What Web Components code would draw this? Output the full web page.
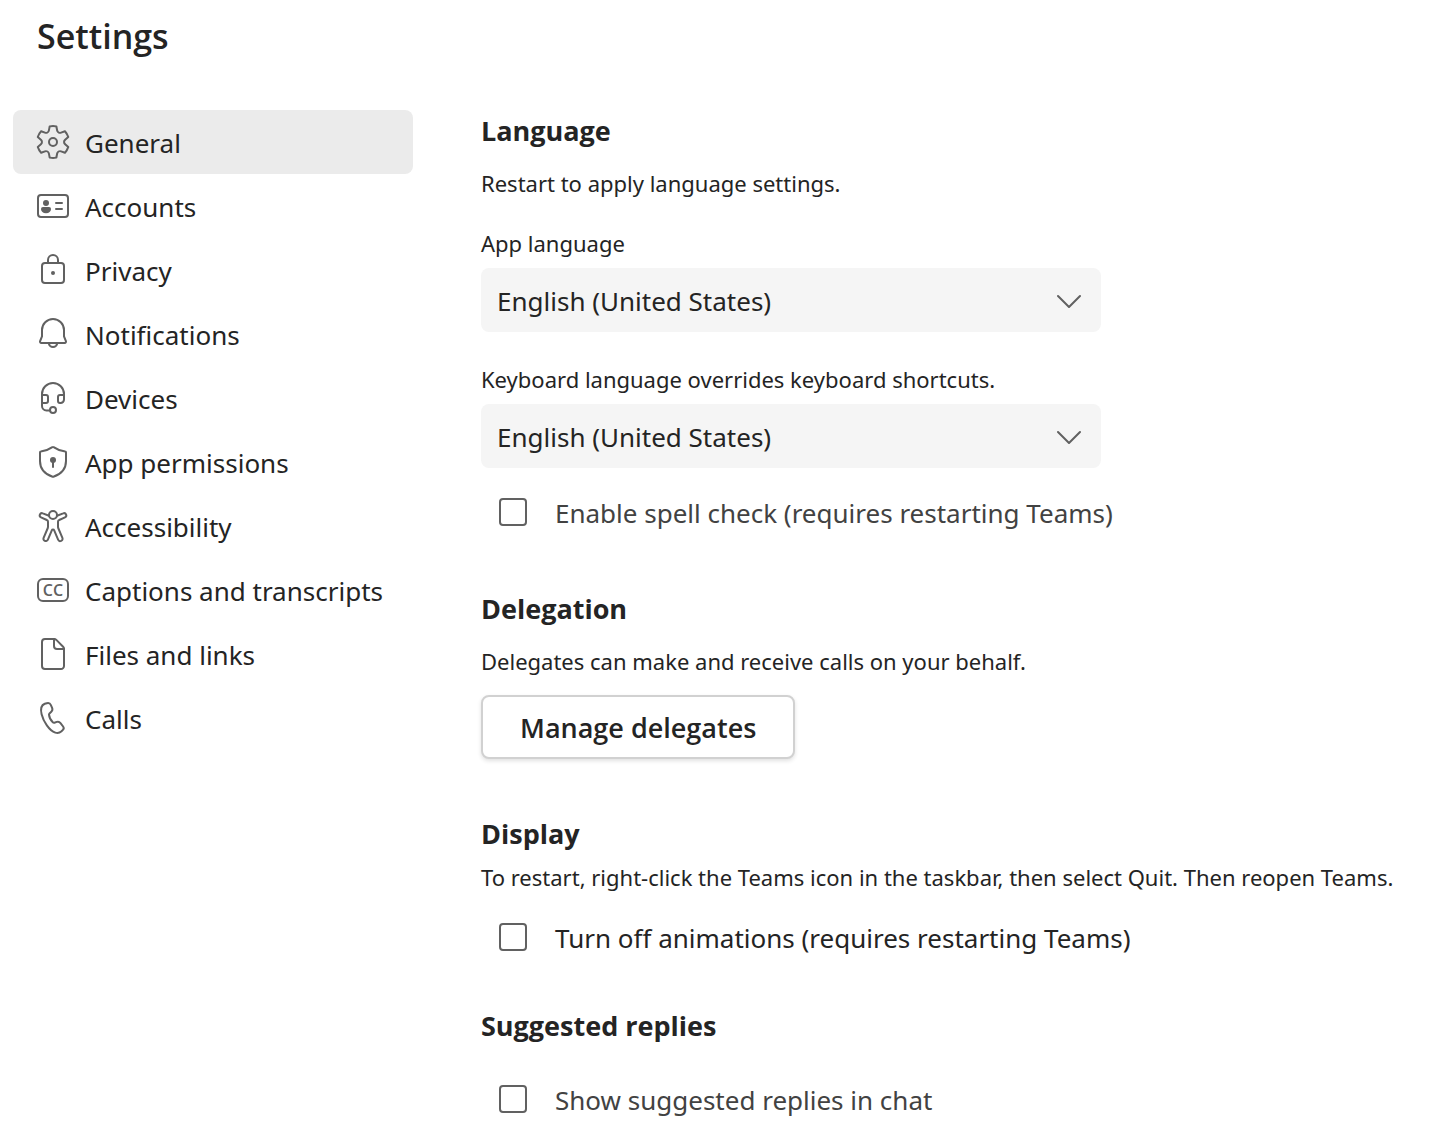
<!DOCTYPE html>
<html lang="en">
<head>
<meta charset="utf-8">
<title>Settings</title>
<style>
  body { margin: 0; background: #fff; color: #242424; font-family: "Noto Sans", "Open Sans", sans-serif; }
</style>
</head>
<body>
<settings-page>
  <settings-nav slot="nav">
    <nav-item icon="gear" href="#general" current>General</nav-item>
    <nav-item icon="card" href="#accounts">Accounts</nav-item>
    <nav-item icon="lock" href="#privacy">Privacy</nav-item>
    <nav-item icon="bell" href="#notifications">Notifications</nav-item>
    <nav-item icon="headset" href="#devices">Devices</nav-item>
    <nav-item icon="shield" href="#permissions">App permissions</nav-item>
    <nav-item icon="person" href="#accessibility">Accessibility</nav-item>
    <nav-item icon="captions" href="#captions">Captions and transcripts</nav-item>
    <nav-item icon="file" href="#files">Files and links</nav-item>
    <nav-item icon="phone" href="#calls">Calls</nav-item>
  </settings-nav>

  <settings-section heading="Language">
    <settings-note>Restart to apply language settings.</settings-note>
    <select-field label="App language" value="English (United States)"></select-field>
    <select-field label="Keyboard language overrides keyboard shortcuts." value="English (United States)" spaced></select-field>
    <check-field muted>Enable spell check (requires restarting Teams)</check-field>
  </settings-section>

  <settings-section heading="Delegation">
    <settings-note>Delegates can make and receive calls on your behalf.</settings-note>
    <action-button>Manage delegates</action-button>
  </settings-section>

  <settings-section heading="Display" compact>
    <settings-note>To restart, right-click the Teams icon in the taskbar, then select Quit. Then reopen Teams.</settings-note>
    <check-field>Turn off animations (requires restarting Teams)</check-field>
  </settings-section>

  <settings-section heading="Suggested replies" loose>
    <check-field muted>Show suggested replies in chat</check-field>
  </settings-section>
</settings-page>

<script>
const ICONS = {
  gear: '<path fill="currentColor" stroke="none" d="M1.91 7.38A8.5 8.5 0 0 1 3.7 4.3a.5.5 0 0 1 .54-.13l1.92.68a1 1 0 0 0 1.32-.76l.36-2a.5.5 0 0 1 .4-.4 8.53 8.53 0 0 1 3.55 0c.2.04.36.2.4.4l.38 2a1 1 0 0 0 1.31.76l1.92-.68a.5.5 0 0 1 .54.13 8.5 8.5 0 0 1 1.78 3.08c.06.2 0 .4-.15.54l-1.56 1.32a1 1 0 0 0 0 1.52l1.56 1.32a.5.5 0 0 1 .15.54 8.5 8.5 0 0 1-1.78 3.08.5.5 0 0 1-.54.13l-1.92-.68a1 1 0 0 0-1.32.76l-.37 2a.5.5 0 0 1-.4.4 8.53 8.53 0 0 1-3.54 0 .5.5 0 0 1-.4-.4l-.37-2a1 1 0 0 0-1.32-.76l-1.92.68a.5.5 0 0 1-.54-.13 8.5 8.5 0 0 1-1.78-3.08.5.5 0 0 1 .15-.54l1.56-1.32a1 1 0 0 0 0-1.52L2.06 7.92a.5.5 0 0 1-.15-.54Zm1.06 0 1.3 1.1a2 2 0 0 1 0 3.04l-1.3 1.1c.3.79.72 1.51 1.25 2.16l1.6-.58a2 2 0 0 1 2.63 1.53l.3 1.67a7.56 7.56 0 0 0 2.5 0l.3-1.67a2 2 0 0 1 2.64-1.53l1.6.57a7.5 7.5 0 0 0 1.24-2.15l-1.3-1.1a2 2 0 0 1 0-3.04l1.3-1.1a7.5 7.5 0 0 0-1.25-2.16l-1.6.58a2 2 0 0 1-2.63-1.53l-.3-1.67a7.55 7.55 0 0 0-2.5 0l-.3 1.67A2 2 0 0 1 5.81 5.8l-1.6-.58a7.5 7.5 0 0 0-1.24 2.16Z"/><circle cx="10" cy="10" r="2"/>',
  card: '<rect x="2.5" y="4.5" width="15" height="11" rx="1.5"/><g fill="currentColor" stroke="none"><circle cx="6.5" cy="8.5" r="1.5"/><path d="M5 10.5h3a1 1 0 0 1 1 1c0 1.2-1 2.1-2.5 2.1S4 12.7 4 11.5a1 1 0 0 1 1-1Z"/></g><path d="M11.5 8.5h3M11.5 11.5h3"/>',
  lock: '<rect x="4.5" y="6.5" width="11" height="10" rx="1.5"/><path d="M7.5 6.5V5a2.5 2.5 0 0 1 5 0v1.5"/><circle cx="10" cy="11.5" r="1" fill="currentColor" stroke="none"/>',
  bell: '<path d="M10 2.5A5.5 5.5 0 0 0 4.5 8v3.2l-.95 2.4a.65.65 0 0 0 .6.9h11.7a.65.65 0 0 0 .6-.9l-.95-2.4V8A5.5 5.5 0 0 0 10 2.5Z"/><path d="M7.9 14.8a2.15 2.15 0 0 0 4.2 0"/>',
  headset: '<path d="M4.5 14V8a5.5 5.5 0 0 1 11 0v2.8a1.7 1.7 0 0 1-1.7 1.7h-.3a1 1 0 0 1-1-1v-2a1 1 0 0 1 1-1h2M4.5 8.5h2a1 1 0 0 1 1 1v2a1 1 0 0 1-1 1h-2M4.5 14a2.2 2.2 0 0 0 2.2 2.2h1.6"/><circle cx="10" cy="16" r="1.5"/>',
  shield: '<path d="M9.7 2.6a.5.5 0 0 1 .6 0c1.9 1.3 3.8 2 5.8 2.2.2 0 .4.2.4.4v4.3c0 3.8-2.2 6.5-6.3 7.9a.6.6 0 0 1-.4 0C5.7 16 3.5 13.3 3.5 9.5V5.2c0-.2.2-.4.4-.4 2-.2 3.9-.9 5.8-2.2Z"/><circle cx="10" cy="9" r="1.5" fill="currentColor" stroke="none"/><path d="M10 9v3.5"/>',
  person: '<circle cx="10" cy="4.5" r="2"/><path d="M8 4.9 4.9 3.7a1.05 1.05 0 0 0-.9 1.95L6.9 7a1 1 0 0 1 .6.9v2.3c0 .3 0 .5-.1.8L5.3 15.900a1.150 1.150 0 0 0 2.150.950L9.400 12.200a.65.65 0 0 1 1.200 0l1.950 4.650a1.150 1.150 0 0 0 2.150-.950L12.600 11a2 2 0 0 1-.1-.8V7.900a1 1 0 0 1 .6-.9l2.900-1.350a1.050 1.050 0 0 0-.9-1.950L12 4.900"/>',
  captions: '<rect x="2.5" y="4.5" width="15" height="11" rx="2.5"/><text x="10" y="12.9" text-anchor="middle" font-size="8" fill="currentColor" stroke="none">CC</text>',
  file: '<path d="M6 2.5h4.6a1.5 1.5 0 0 1 1.06.44l3.4 3.4a1.5 1.5 0 0 1 .44 1.06V16a1.5 1.5 0 0 1-1.5 1.5H6A1.5 1.5 0 0 1 4.5 16V4A1.5 1.5 0 0 1 6 2.5Z"/><path d="M10.5 2.5V6A1.5 1.5 0 0 0 12 7.5h3.5"/>',
  phone: '<path d="m5.9 2.9 1-.3a1.7 1.7 0 0 1 2.05.95l.6 1.4a1.7 1.7 0 0 1-.4 1.9l-.9.85a.8.8 0 0 0-.25.6c.1 1.2 1 3 2 3.9.2.2.4.2.7.15l1.2-.4a1.7 1.7 0 0 1 1.85.6l1.3 1.7a1.3 1.3 0 0 1-.1 1.7l-.7.7c-.9.8-2 1-3.1.65C8.1 16.3 5.2 11.7 4.3 8.1c-.6-2.5-.4-4.4 1.6-5.2Z"/>'
};

function define(name, html, setup) {
  const template = document.createElement("template");
  template.innerHTML = html;
  customElements.define(name, class extends HTMLElement {
    connectedCallback() {
      if (this.shadowRoot) return;
      const root = this.attachShadow({ mode: "open" });
      root.append(template.content.cloneNode(true));
      if (setup) setup(this, root);
    }
  });
}

define("settings-page", `
  <style>
    :host { display: block; padding: 8px 4px 0 13px; }
    h1 { margin: 0; padding-left: 24px; font-family: "Open Sans", sans-serif; font-size: 34px; line-height: 56px; font-weight: 600; }
    .body { display: flex; align-items: flex-start; gap: 68px; padding-top: 46px; }
    main { flex: 1; min-width: 0; padding-top: 1px; }
  </style>
  <h1>Settings</h1>
  <div class="body">
    <slot name="nav"></slot>
    <main><slot></slot></main>
  </div>`);

define("settings-nav", `
  <style>
    :host { display: block; flex: 0 0 400px; }
    nav { display: flex; flex-direction: column; }
  </style>
  <nav aria-label="Settings"><slot></slot></nav>`);

define("nav-item", `
  <style>
    :host { display: block; }
    a { display: flex; align-items: center; gap: 12px; height: 64px; padding: 0 20px; border-radius: 8px;
        color: inherit; text-decoration: none; font-size: 26px; line-height: 40px; white-space: nowrap; }
    :host([current]) a { background: #ebebeb; }
    span { padding-top: 2px; }
    svg { flex: none; width: 40px; height: 40px; color: #616161; fill: none; stroke: currentColor;
          font-family: "Liberation Sans Narrow", "Open Sans", sans-serif; font-weight: 600;
          stroke-width: 1; stroke-linecap: round; stroke-linejoin: round; }
  </style>
  <a><svg viewBox="0 0 20 20" aria-hidden="true"></svg><span><slot></slot></span></a>`,
  (host, root) => {
    const link = root.querySelector("a");
    link.setAttribute("href", host.getAttribute("href"));
    if (host.hasAttribute("current")) link.setAttribute("aria-current", "page");
    root.querySelector("svg").innerHTML = ICONS[host.getAttribute("icon")];
  });

define("settings-section", `
  <style>
    :host { display: block; margin-bottom: 53px; }
    :host([compact]) { margin-bottom: 45px; }
    :host(:last-child) { margin-bottom: 0; }
    h2 { margin: 0 0 16px; font-family: "Open Sans", sans-serif; font-size: 27px; line-height: 40px; font-weight: 700; }
    :host([compact]) h2 { margin-bottom: 7px; }
    :host([loose]) h2 { margin-bottom: 29px; }
  </style>
  <section><h2></h2><slot></slot></section>`,
  (host, root) => { root.querySelector("h2").textContent = host.getAttribute("heading"); });

define("settings-note", `
  <style>
    :host { display: block; }
    p { margin: 0; font-size: 22px; line-height: 32px; }
  </style>
  <p><slot></slot></p>`);

define("select-field", `
  <style>
    :host { display: block; margin-top: 28px; max-width: 620px; }
    :host([spaced]) { margin-top: 31px; }
    label { display: block; margin-bottom: 9px; font-size: 22px; line-height: 32px; }
    .box { display: grid; align-items: center; }
    select, svg { grid-area: 1 / 1; }
    select { appearance: none; width: 100%; height: 64px; margin: 0; padding: 2px 64px 0 16px; border: 0; border-radius: 8px;
             background: #f5f5f5; color: inherit; font: inherit; font-size: 26px; }
    svg { justify-self: end; width: 24px; height: 16px; margin-right: 20px; pointer-events: none;
          fill: none; stroke: #616161; stroke-width: 2; stroke-linecap: round; stroke-linejoin: round; }
  </style>
  <label for="field"></label>
  <div class="box">
    <select id="field"><option></option></select>
    <svg viewBox="0 0 24 16" aria-hidden="true"><path d="M1 4l11 11L23 4"/></svg>
  </div>`,
  (host, root) => {
    root.querySelector("label").textContent = host.getAttribute("label");
    root.querySelector("option").textContent = host.getAttribute("value");
  });

define("check-field", `
  <style>
    :host { display: block; margin-top: 20px; }
    label { display: flex; align-items: center; gap: 28px; min-height: 48px; padding-left: 18px;
            font-size: 26px; line-height: 40px; }
    :host([muted]) label { color: #424242; }
    span { padding-top: 2px; }
    input { appearance: none; flex: none; width: 28px; height: 28px; margin: 0; border: 2px solid #616161; border-radius: 4px; background: #fff; }
    input:checked { background: #5b5fc7; border-color: #5b5fc7; }
  </style>
  <label><input type="checkbox"><span><slot></slot></span></label>`);

define("action-button", `
  <style>
    :host { display: flex; margin: 18px 0 55px; }
    button { height: 64px; padding: 0 37px; border: 2px solid #d1d1d1; border-radius: 8px; background: #fff; color: inherit;
             font-family: "Open Sans", sans-serif; font-size: 27px; font-weight: 600; box-shadow: 0 2px 4px rgba(0, 0, 0, .12); }
  </style>
  <button type="button"><slot></slot></button>`);
</script>
</body>
</html>
